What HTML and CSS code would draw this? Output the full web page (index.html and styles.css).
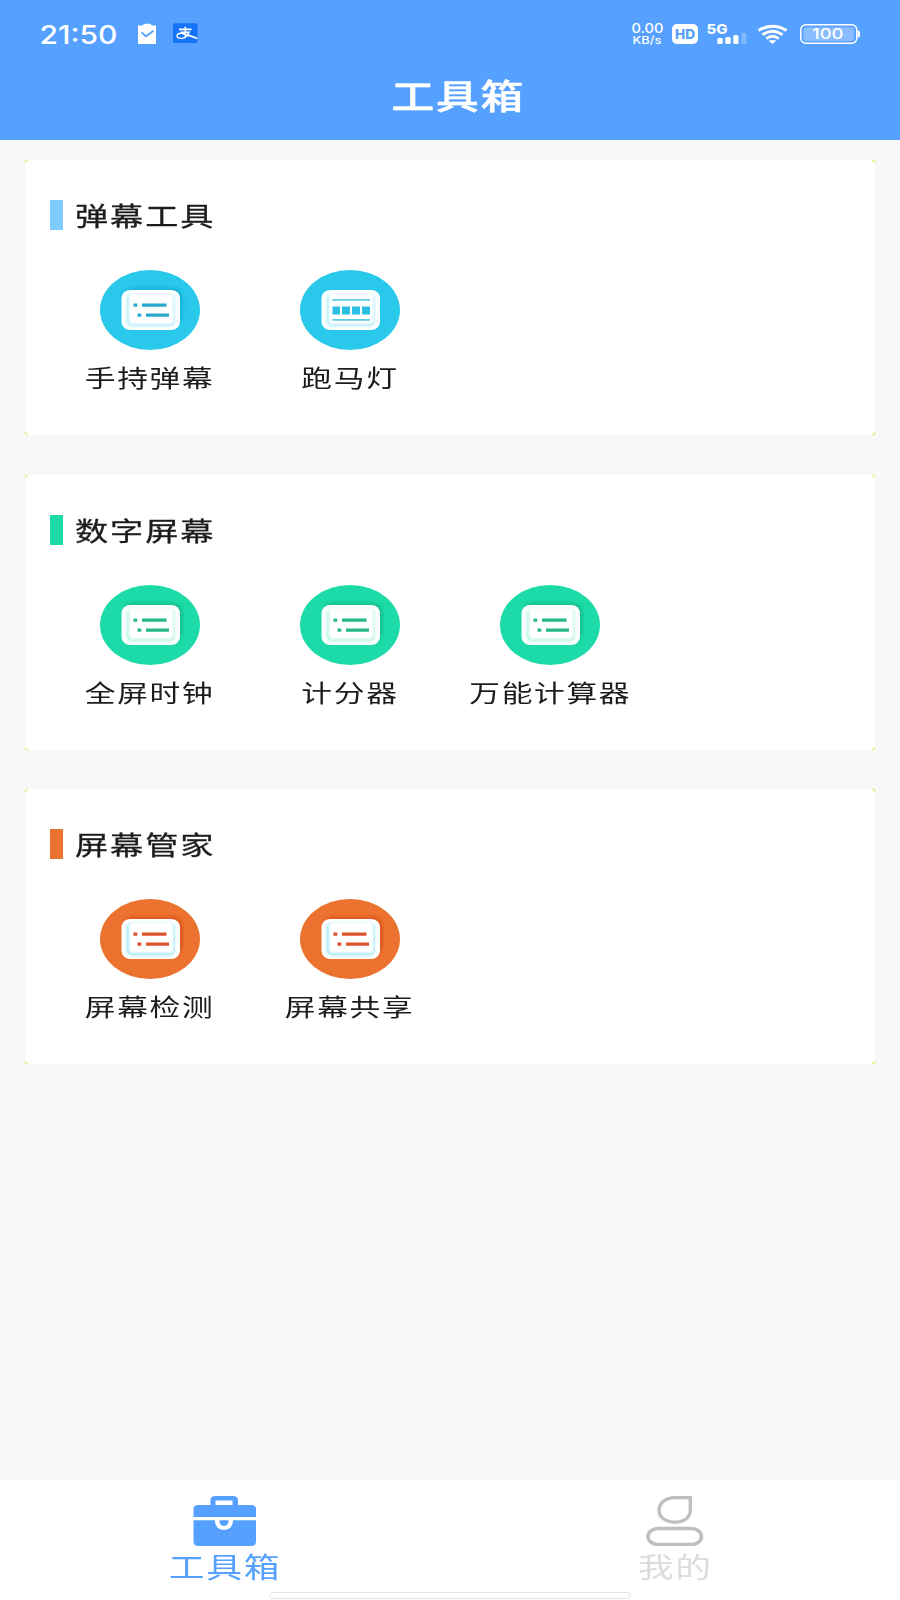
FILE: index.html
```html
<!DOCTYPE html>
<html lang="zh-CN">
<head>
<meta charset="utf-8">
<title>工具箱</title>
<link rel="stylesheet" href="styles.css">
</head>
<body>
<svg class="defs" width="0" height="0" aria-hidden="true">
  <defs>
    <filter id="soft" x="-20%" y="-20%" width="140%" height="140%"><feGaussianBlur stdDeviation="2.2"/></filter>
    <filter id="edge" x="-20%" y="-20%" width="140%" height="140%"><feGaussianBlur stdDeviation="0.9"/></filter>
    <symbol id="panel" viewBox="0 0 100 80">
      <ellipse cx="50" cy="40" rx="50" ry="40" fill="currentColor"/>
      <rect class="shade" x="24" y="18" width="58" height="38" rx="9" filter="url(#soft)"/>
      <rect x="21.5" y="20" width="58.5" height="40" rx="9" ry="8" fill="#fff"/>
      <rect class="rim" x="26.500" y="23.500" width="48.500" height="33" rx="5" filter="url(#edge)"/>
      <rect x="29" y="23" width="44.500" height="31" rx="4" fill="#fff" filter="url(#edge)"/>
    </symbol>
    <symbol id="list" viewBox="0 0 100 80">
      <use href="#panel" width="100" height="80"/>
      <path class="ink" d="M33.500 33.500h3.800v3.200h-3.800zM42 33.500h24.500v3.200h-24.500zM37.500 43.500h3.800v3.200h-3.800zM46 43.500h23v3.200h-23z"/>
    </symbol>
    <symbol id="marquee" viewBox="0 0 100 80">
      <use href="#panel" width="100" height="80"/>
      <path fill="#5dcce6" d="M32.500 29h37.500v1.800h-37.500zM32.500 49h37.500v1.800h-37.500z"/>
      <path fill="#2cbfe4" d="M32.500 36.500h7.500v8h-7.500zM42 36.500h8v8h-8zM52 36.500h8v8h-8zM62 36.500h8v8h-8z"/>
    </symbol>
  </defs>
</svg>
<div class="screen">
  <header class="header">
    <div class="status">
      <svg class="status-left" width="220" height="70" viewBox="0 0 220 70">
        <text class="latin" x="39.500" y="43.500" font-size="25.500" textLength="78" lengthAdjust="spacingAndGlyphs">21:50</text>
        <path fill="#fff" d="M138 25.500h5q0-1.800 2-1.800h4.500q2 0 2 1.800h4.500v18.500h-18z"/>
        <path d="M141.500 32.300l4.500 4 7.500-5.500" fill="none" stroke="#56a1ff" stroke-width="1.800"/>
        <rect x="173" y="23.300" width="24.500" height="19.700" rx="1.500" fill="#1672fa"/>
        <path d="M179 29.300h12.500M185.300 26.700v5" fill="none" stroke="#fff" stroke-width="1.700"/>
        <ellipse cx="181.300" cy="35.800" rx="4.300" ry="2.600" fill="none" stroke="#fff" stroke-width="1.400"/>
        <path d="M180.500 32.200h8.500q-1.500 3.800-4.500 5.300M183 33.600q6 1.500 14.300 4.900" fill="none" stroke="#fff" stroke-width="1.600"/>
      </svg>
      <svg class="status-right" width="290" height="70" viewBox="0 0 290 70">
        <text class="latin" x="21.500" y="33.300" font-size="12.800" textLength="32" lengthAdjust="spacingAndGlyphs">0.00</text>
        <text class="latin" x="22.500" y="44" font-size="11" textLength="29" lengthAdjust="spacingAndGlyphs">KB/s</text>
        <rect x="62" y="24" width="26" height="20" rx="5" fill="#fff"/>
        <text class="latin bold hd" x="65" y="38.700" font-size="13" textLength="20" lengthAdjust="spacingAndGlyphs">HD</text>
        <text class="latin bold" x="96.500" y="33.700" font-size="13" textLength="21" lengthAdjust="spacingAndGlyphs">5G</text>
        <g fill="#fff">
          <rect x="107.300" y="38" width="5.500" height="6" rx="1.500"/>
          <rect x="115.300" y="37" width="5.500" height="7" rx="1.500"/>
          <rect x="123.300" y="35" width="5.200" height="9" rx="1.500"/>
          <rect x="131.300" y="33" width="5" height="11" rx="1" opacity=".25"/>
        </g>
        <g fill="none" stroke="#fff" stroke-width="2.900">
          <path d="M148.500 30.500q14-8.500 28 0"/>
          <path d="M152.500 34.700q10-7 20 0"/>
          <path d="M156.300 38.600q6.200-4.500 12.400 0"/>
        </g>
        <path d="M158.800 40.800q3.700-1.800 7.400 0l-3.700 3.200z" fill="#fff"/>
        <rect x="190.800" y="24.800" width="56" height="18.500" rx="5" fill="none" stroke="#fff" stroke-width="1.500"/>
        <rect x="193.500" y="27.200" width="50.500" height="13.800" rx="2.500" fill="#fff" opacity=".3"/>
        <path d="M247.500 30.500q2.500 0 2.500 1.500v4q0 1.500-2.500 1.500z" fill="#fff"/>
        <text class="latin" x="202" y="39.300" font-size="14.500" textLength="31.500" lengthAdjust="spacingAndGlyphs">100</text>
      </svg>
    </div>
    <h1 class="title">工具箱</h1>
  </header>

  <main class="cards">
    <section class="card blue">
      <h2 class="heading"><i class="bar"></i><span class="wide">弹幕工具</span></h2>
      <div class="tools">
        <div class="tool"><svg class="icon"><use href="#list"/></svg><span class="label">手持弹幕</span></div>
        <div class="tool"><svg class="icon plain"><use href="#marquee"/></svg><span class="label">跑马灯</span></div>
      </div>
    </section>
    <section class="card green">
      <h2 class="heading"><i class="bar"></i><span class="wide">数字屏幕</span></h2>
      <div class="tools">
        <div class="tool"><svg class="icon"><use href="#list"/></svg><span class="label">全屏时钟</span></div>
        <div class="tool"><svg class="icon"><use href="#list"/></svg><span class="label">计分器</span></div>
        <div class="tool"><svg class="icon"><use href="#list"/></svg><span class="label">万能计算器</span></div>
      </div>
    </section>
    <section class="card orange">
      <h2 class="heading"><i class="bar"></i><span class="wide">屏幕管家</span></h2>
      <div class="tools">
        <div class="tool"><svg class="icon"><use href="#list"/></svg><span class="label">屏幕检测</span></div>
        <div class="tool"><svg class="icon"><use href="#list"/></svg><span class="label">屏幕共享</span></div>
      </div>
    </section>
  </main>

  <nav class="tabs">
    <div class="tab active">
      <svg width="64" height="50" viewBox="0 0 64 50">
        <path fill="currentColor" fill-rule="evenodd" d="M0.500 21V13q0-4 5-4h12V4q0-4 5-4h17.500q5 0 5 4v5h13q5 0 5 4v8zM22.500 9h17V4.500h-17z"/>
        <path fill="currentColor" d="M0.500 24.300H22c0 6 3.500 9.500 9 9.500s9-3.500 9-9.500H63V45.500q0 4.500-5 4.500H5.500q-5 0-5-4.500z"/>
        <path fill="currentColor" d="M26.500 24.300h9c0 3.500-1.500 5.700-4.500 5.700s-4.500-2.200-4.500-5.700z"/>
      </svg>
      <span class="tab-label">工具箱</span>
    </div>
    <div class="tab">
      <svg width="58" height="50" viewBox="0 0 58 50">
        <g fill="none" stroke="#bfbfbf">
          <path stroke-width="3.400" d="M44.300 1.500H29.500C20 1.500 13 7 13 14.200c0 6.800 6.500 12 16 12s15.300-5.200 15.300-12z"/>
          <rect x="2" y="32.500" width="53.500" height="16" rx="10" ry="8" stroke-width="3.600"/>
        </g>
      </svg>
      <span class="tab-label">我的</span>
    </div>
    <div class="home-pill"></div>
  </nav>
</div>
</body>
</html>
```
FILE: styles.css
```css
* { box-sizing: border-box; }

body {
  margin: 0;
  font-family: "Noto Sans CJK SC", sans-serif;
  background: #f8f8f8;
}

.defs { position: absolute; }

.screen {
  display: flex;
  flex-direction: column;
  width: 900px;
  height: 1600px;
  overflow: hidden;
}

.header {
  height: 140px;
  flex: none;
  background: #56a1ff;
  color: #fff;
}

.status {
  display: flex;
  justify-content: space-between;
  height: 70px;
}

.latin {
  font-family: Inter, "Liberation Sans", sans-serif;
  font-weight: 500;
  fill: #fff;
}

.bold { font-weight: 800; }
.hd { fill: #56a1ff; }

.title {
  margin: 0;
  height: 50px;
  padding-left: 13px;
  line-height: 49px;
  text-align: center;
  font-size: 33.800px;
  letter-spacing: 1.400px;
  font-weight: 500;
  -webkit-text-stroke: 0.5px #fff;
  transform: scaleX(1.265);
}

.cards {
  flex: 1;
  display: flex;
  flex-direction: column;
  gap: 39.500px;
  padding: 20px 25px 0;
}

.card {
  height: 275px;
  padding: 40px 25px 0;
  /* small yellow ticks behind the rounded corners */
  background:
    linear-gradient(#fff, #fff) 0 3px / 100% calc(100% - 6px) no-repeat,
    linear-gradient(#fff, #fff) 3px 0 / calc(100% - 6px) 100% no-repeat,
    linear-gradient(#fff, #fff) 1px 1px / calc(100% - 2px) calc(100% - 2px) no-repeat,
    #e6e65a;
  border-radius: 2px;
}

.heading {
  display: flex;
  align-items: center;
  gap: 12.500px;
  height: 30px;
  margin: 0 0 40px;
  font-size: 26px;
  letter-spacing: 1.500px;
  line-height: 28px;
  font-weight: 400;
  -webkit-text-stroke: 0.3px #1c1c1c;
  color: #1c1c1c;
}

.bar {
  width: 12.5px;
  height: 30px;
  background: currentColor;
}

.wide {
  transform: scaleX(1.275);
  transform-origin: left center;
}

.blue .bar { color: #7dcbff; }
.green .bar { color: #1ddba8; }
.orange .bar { color: #ec732f; }

.blue .icon { color: #2ac9ec; --shade: #18aed4; --ink: #2aa9cf; --rim: #b9effb; }
.green .icon { color: #1ddba8; --shade: #14b989; --ink: #26b886; --rim: #b9f5e3; }
.orange .icon { color: #ec732f; --shade: #d9501c; --ink: #d9532c; --rim: #a8e8f8; }
.icon.plain { --shade: #2ac9ec; }

.shade { fill: var(--shade); }
.rim { fill: var(--rim); }
.ink { fill: var(--ink); }

.tools { display: flex; }

.tool {
  display: flex;
  flex-direction: column;
  align-items: center;
  width: 200px;
}

.icon { width: 100px; height: 80px; }

.label {
  margin-top: 8px;
  height: 38px;
  line-height: 38px;
  font-size: 24px;
  letter-spacing: 1.300px;
  font-weight: 400;
  color: #1c1c1c;
  white-space: nowrap;
  transform: scaleX(1.28);
}

.tabs {
  position: relative;
  flex: none;
  display: flex;
  height: 120px;
  background: #fff;
}

.tab {
  flex: 1;
  display: flex;
  flex-direction: column;
  align-items: center;
  padding-top: 16px;
  color: #dcdcdc;
}

.tab.active { color: #56a1ff; }

.tab-label {
  height: 41px;
  line-height: 41px;
  font-size: 28px;
  letter-spacing: 1.300px;
  transform: scaleX(1.28);
}

.home-pill {
  position: absolute;
  left: 269px;
  top: 112px;
  width: 362px;
  height: 7px;
  border: 1px solid #e4e4e4;
  border-radius: 4px;
  background: #fff;
}
```
